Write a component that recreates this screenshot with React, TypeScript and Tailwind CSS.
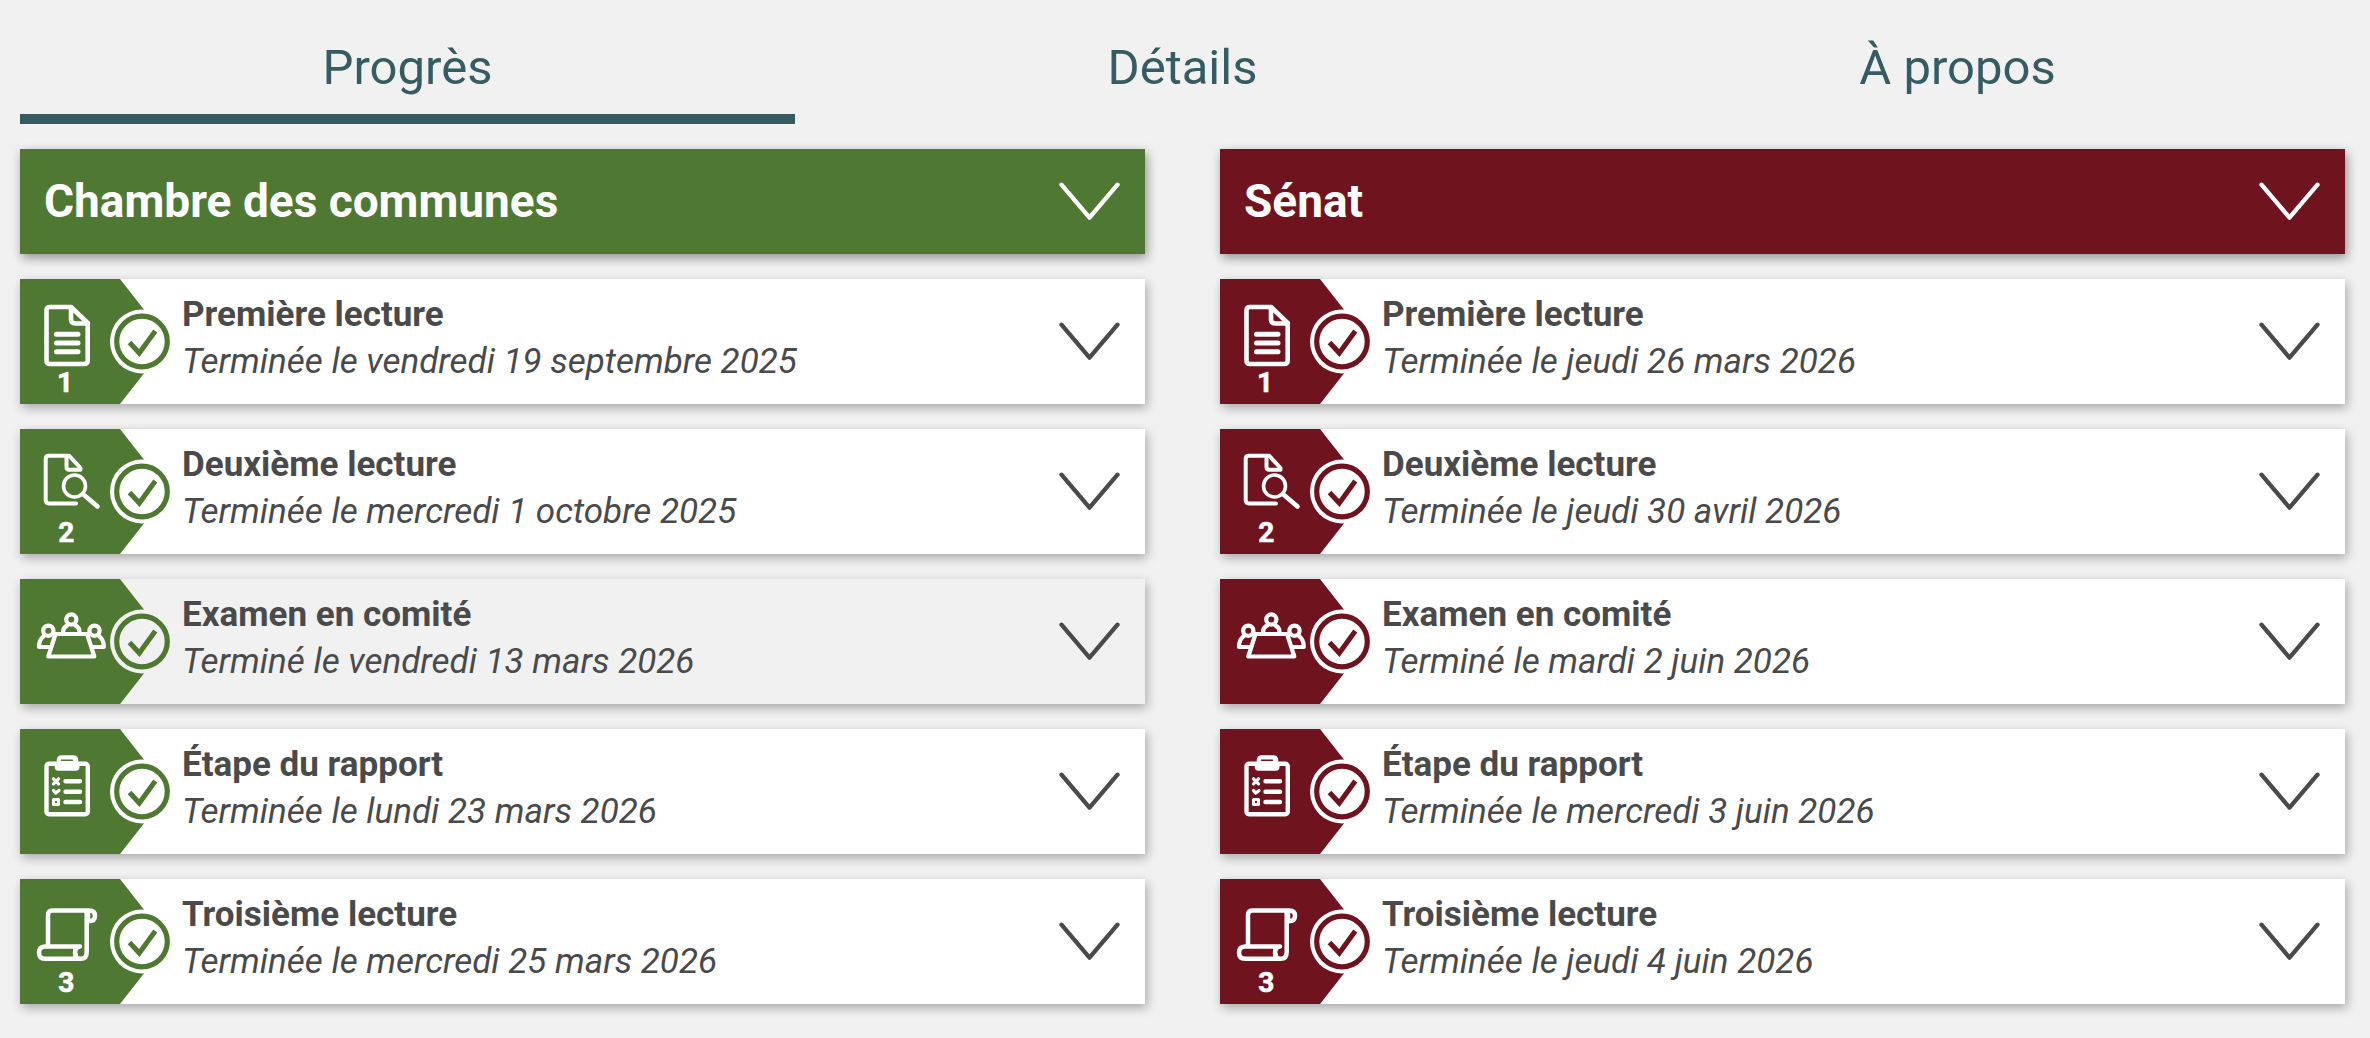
import { ReactNode, useState } from "react";

type IconName = "first" | "second" | "committee" | "report" | "third";

interface Stage {
  icon: IconName;
  step?: string;
  title: string;
  status: string;
}

interface Chamber {
  name: string;
  headerClass: string;
  colorClass: string;
  stages: Stage[];
}

const tabs = ["Progrès", "Détails", "À propos"];

const chambers: Chamber[] = [
  {
    name: "Chambre des communes",
    headerClass: "bg-[#4f7932]",
    colorClass: "text-[#4f7932]",
    stages: [
      { icon: "first", step: "1", title: "Première lecture", status: "Terminée le vendredi 19 septembre 2025" },
      { icon: "second", step: "2", title: "Deuxième lecture", status: "Terminée le mercredi 1 octobre 2025" },
      { icon: "committee", title: "Examen en comité", status: "Terminé le vendredi 13 mars 2026" },
      { icon: "report", title: "Étape du rapport", status: "Terminée le lundi 23 mars 2026" },
      { icon: "third", step: "3", title: "Troisième lecture", status: "Terminée le mercredi 25 mars 2026" },
    ],
  },
  {
    name: "Sénat",
    headerClass: "bg-[#6f141e]",
    colorClass: "text-[#6f141e]",
    stages: [
      { icon: "first", step: "1", title: "Première lecture", status: "Terminée le jeudi 26 mars 2026" },
      { icon: "second", step: "2", title: "Deuxième lecture", status: "Terminée le jeudi 30 avril 2026" },
      { icon: "committee", title: "Examen en comité", status: "Terminé le mardi 2 juin 2026" },
      { icon: "report", title: "Étape du rapport", status: "Terminée le mercredi 3 juin 2026" },
      { icon: "third", step: "3", title: "Troisième lecture", status: "Terminée le jeudi 4 juin 2026" },
    ],
  },
];

// All stage icons share the 150x125 coordinate space of the badge
const icons: Record<IconName, ReactNode> = {
  first: (
    <g strokeWidth="4.600">
      <path d="M51 28H30q-3.500 0-3.500 3.500v50q0 3.500 3.500 3.500h34q3.700 0 3.700-3.500V44z" />
      <path d="M51 28v12q0 4.500 4.500 4.500H68" />
      <path d="M36.500 55.300h21.500M36.500 64h21.500M36.500 72.800h21.500" strokeWidth="5" />
    </g>
  ),
  second: (
    <g strokeWidth="4">
      <path d="M56 74.400H29q-3.300 0-3.300-3.300V30q0-3.300 3.300-3.300h20L60.500 39" />
      <path d="M46.500 27v11q0 2.800 2.800 2.800H60.500" />
      <circle cx="54.500" cy="57" r="11" strokeWidth="3.600" />
      <path d="M64 66l13.500 11.500" strokeWidth="4.600" />
    </g>
  ),
  committee: (
    <g strokeWidth="4.200">
      <circle cx="51.300" cy="40.500" r="5.100" />
      <path d="M43.200 54v-2q0-3.500 4-5.500M59.400 54v-2q0-3.500-4-5.500" />
      <path d="M32.500 55h37.500M35.500 55L28.300 77.500H74.300L67.100 55" />
      <circle cx="28.300" cy="51.700" r="5.100" />
      <path d="M24 57q-5 3-5 11h11" />
      <circle cx="74.500" cy="51.700" r="5.100" />
      <path d="M78.800 57q5 3 5 11h-11" />
    </g>
  ),
  report: (
    <g strokeWidth="4.400">
      <rect x="26.500" y="34.700" width="41.300" height="50.600" rx="2.500" />
      <path d="M38.500 35v-3.500q0-3.500 3.500-3.500h11q3.500 0 3.500 3.500V35z" fill="white" strokeWidth="3.600" />
      <path d="M34.700 34H59.500v4q0 3.700-3.700 3.700H38.400q-3.700 0-3.700-3.700z" fill="white" stroke="none" />
      <path d="M41.500 31.200h11" stroke="currentColor" strokeWidth="1.400" />
      <path d="M45.500 52.300H60M45.500 62.700H60M45.500 73H60" />
      <path d="M33.500 49.800l5 5M38.500 49.800l-5 5M33.500 61.500l2.300 2.600 3.200-2.600" strokeWidth="3.200" />
      <rect x="33.500" y="70.600" width="5" height="5" strokeWidth="3" />
    </g>
  ),
  third: (
    <g strokeWidth="4.500">
      <path d="M28 66V36q0-4.500 4.500-4.500h37q5.500 0 5.500 5.500 0 5.200-6.500 5.200" />
      <path d="M66.700 33V73q0 6.800-6 6.800H25q-6 0-6-6t6-6.300H60q-5 .5-5 6.300 0 5.500 5 6" />
      <path d="M69 33v8" strokeWidth="2.500" />
      <path d="M56.500 75v4" strokeWidth="3" />
    </g>
  ),
};

function Chevron() {
  return (
    <svg width="62" height="40" viewBox="0 0 62 40" fill="none" className="shrink-0" aria-hidden="true">
      <path d="M2.500 2.700L30.500 35.700L58.500 2.700" stroke="currentColor" strokeWidth="4.300" strokeLinecap="round" strokeLinejoin="round" />
    </svg>
  );
}

function StageBadge({ stage, colorClass, active }: { stage: Stage; colorClass: string; active: boolean }) {
  return (
    <svg
      width="155"
      height="125"
      viewBox="0 0 155 125"
      className={`shrink-0 ${colorClass}`}
      aria-hidden="true"
    >
      <path d="M0 0H100L149 62.500L100 125H0z" fill="currentColor" />
      <g fill="none" stroke="white" strokeLinecap="round" strokeLinejoin="round">
        {icons[stage.icon]}
      </g>
      {stage.step && (
        <text
          x={stage.step === "1" ? 45 : 46.3}
          y="112.700"
          textAnchor="middle"
          fill="white"
          stroke="white"
          strokeWidth="0.600"
          className="text-[28px] font-bold"
        >
          {stage.step}
        </text>
      )}
      {/* Completed marker */}
      <circle cx="122" cy="62.500" r="32" fill={active ? "#f1f1f1" : "white"} />
      <circle cx="122" cy="62.500" r="25.300" fill="none" stroke="currentColor" strokeWidth="5.200" />
      <path d="M109.500 63.500L119.300 74L135.300 52" fill="none" stroke="currentColor" strokeWidth="5" />
    </svg>
  );
}

function StageCard({ stage, colorClass, active }: { stage: Stage; colorClass: string; active: boolean }) {
  return (
    <button
      className={`flex h-[125px] w-full cursor-pointer items-center pr-6 text-left text-[#4a4a4a] shadow-[2px_4px_10px_rgba(0,0,0,0.3)] ${
        active ? "bg-[#f1f1f1]" : "bg-white"
      }`}
    >
      <StageBadge stage={stage} colorClass={colorClass} active={active} />
      <span className="flex grow flex-col pb-2 pl-[7px] text-[35px] leading-[47px]">
        <span className="font-bold">{stage.title}</span>
        <span className="italic">{stage.status}</span>
      </span>
      <Chevron />
    </button>
  );
}

export default function App() {
  const [activeTab, setActiveTab] = useState(0);

  return (
    <div className="h-[1038px] w-[2370px] overflow-hidden bg-[#f1f1f1] px-5 font-[Roboto,sans-serif]">
      <nav className="mr-[5px] grid h-[124px] grid-cols-3">
        {tabs.map((tab, i) => (
          <button
            key={tab}
            onClick={() => setActiveTab(i)}
            className={`cursor-pointer border-b-10 pt-[22px] text-[49px] leading-[60px] text-[#355b63] ${
              activeTab === i ? "border-[#355b63]" : "border-transparent"
            }`}
          >
            {tab}
          </button>
        ))}
      </nav>

      <main className="mt-[25px] mr-[5px] grid grid-cols-2 gap-[75px]">
        {chambers.map((chamber, c) => (
          <section key={chamber.name} className="flex flex-col gap-[25px]">
            <button
              className={`flex h-[105px] w-full cursor-pointer items-center justify-between pr-6 pl-6 text-white shadow-[2px_4px_10px_rgba(0,0,0,0.4)] ${chamber.headerClass}`}
            >
              <span className="text-[46px] font-bold">{chamber.name}</span>
              <Chevron />
            </button>
            {chamber.stages.map((stage, i) => (
              <StageCard key={stage.title} stage={stage} colorClass={chamber.colorClass} active={c === 0 && i === 2} />
            ))}
          </section>
        ))}
      </main>
    </div>
  );
}
